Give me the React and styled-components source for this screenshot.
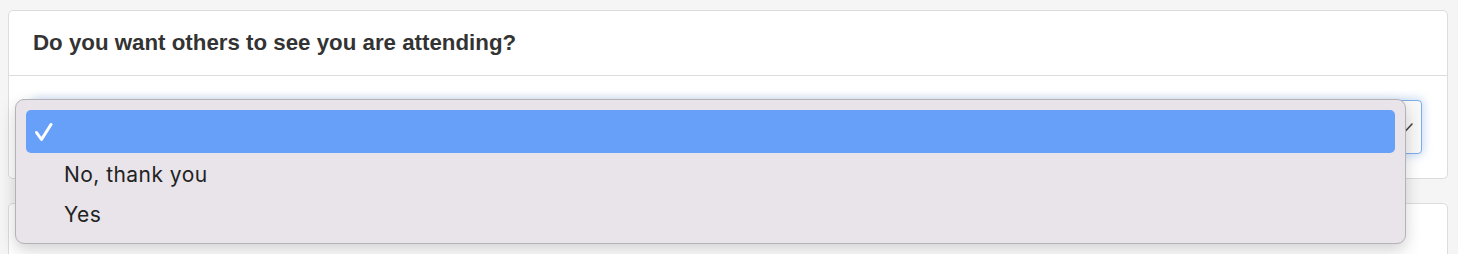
import styled, { createGlobalStyle } from "styled-components"

const GlobalStyle = createGlobalStyle`
    html, body {
        margin: 0;
        background: #f5f5f5;
    }

    body {
        font-family: "Liberation Sans", Arial, sans-serif;
        overflow: hidden;
    }
`

const Page = styled.div`
    position: relative;
    height: 254px;
    overflow: hidden;
    padding: 10px 10px 0 8px;
    box-sizing: border-box;
    display: flex;
    flex-direction: column;
    gap: 24px;
`

const Card = styled.section`
    background: #fff;
    border: 1px solid #dcdcdc;
    border-radius: 5px;
    flex-shrink: 0;
    height: ${p => p.$height || "auto"};
`

const CardHeader = styled.header`
    height: 64px;
    padding: 0 24px;
    display: flex;
    align-items: center;
    border-bottom: 1px solid #dcdcdc;

    h2 {
        margin: 0;
        font-size: 22.3px;
        font-weight: 700;
        color: #333;
    }
`

const CardBody = styled.div`
    padding: 24px 25px 24px 24px;
`

const SelectBox = styled.div`
    height: 54px;
    box-sizing: border-box;
    border: 1px solid #7eaee8;
    border-radius: 4px;
    background: #f8f8f8;
    box-shadow: 0 0 8px 2px rgba(110, 160, 225, 0.35);
    display: flex;
    align-items: center;
    justify-content: flex-end;
    padding-right: 8px;

    svg {
        width: 14px;
        height: 14px;
    }
`

const Menu = styled.ul`
    position: absolute;
    left: 15px;
    top: 99px;
    width: 1391px;
    height: 145px;
    box-sizing: border-box;
    margin: 0;
    padding: 10px;
    list-style: none;
    background: #e8e4ea;
    border: 1px solid #b4b2b6;
    border-radius: 9px;
    box-shadow: 0 6px 16px rgba(0, 0, 0, 0.18);
    font-family: Inter, "Liberation Sans", sans-serif;
`

const Option = styled.li`
    height: ${p => p.$h}px;
    display: flex;
    align-items: center;
    padding-left: 38px;
    border-radius: 5px;
    position: relative;
    font-size: 21px;
    letter-spacing: 0.45px;
    color: #222;
    background: ${p => (p.$active ? "#67a0f8" : "transparent")};

    svg {
        position: absolute;
        left: 9px;
        top: 50%;
        transform: translateY(-50%);
    }
`

const Check = () => (
    <svg width="18" height="20" viewBox="0 0 18 20">
        <path d="M1.5 10.5 L6.5 17.5 L16 2.5" fill="none" stroke="#fff" strokeWidth="3" strokeLinecap="round" strokeLinejoin="round" />
    </svg>
)

const Chevron = () => (
    <svg viewBox="0 0 14 14">
        <path d="M1 4 L7 10.5 L13 4" fill="none" stroke="#444" strokeWidth="1.6" strokeLinecap="round" strokeLinejoin="round" />
    </svg>
)

const options = [
    { label: "", active: true, h: 43 },
    { label: "No, thank you", h: 42 },
    { label: "Yes", h: 39 },
]

export default function App() {
    return (
        <>
            <GlobalStyle />
            <Page>
                <Card>
                    <CardHeader>
                        <h2>Do you want others to see you are attending?</h2>
                    </CardHeader>
                    <CardBody>
                        <SelectBox>
                            <Chevron />
                        </SelectBox>
                    </CardBody>
                </Card>
                <Card $height="120px" />
                <Menu>
                    {options.map((o, i) => (
                        <Option key={`opt-${i}`} $active={o.active} $h={o.h}>
                            {o.active && <Check />}
                            {o.label}
                        </Option>
                    ))}
                </Menu>
            </Page>
        </>
    )
}
